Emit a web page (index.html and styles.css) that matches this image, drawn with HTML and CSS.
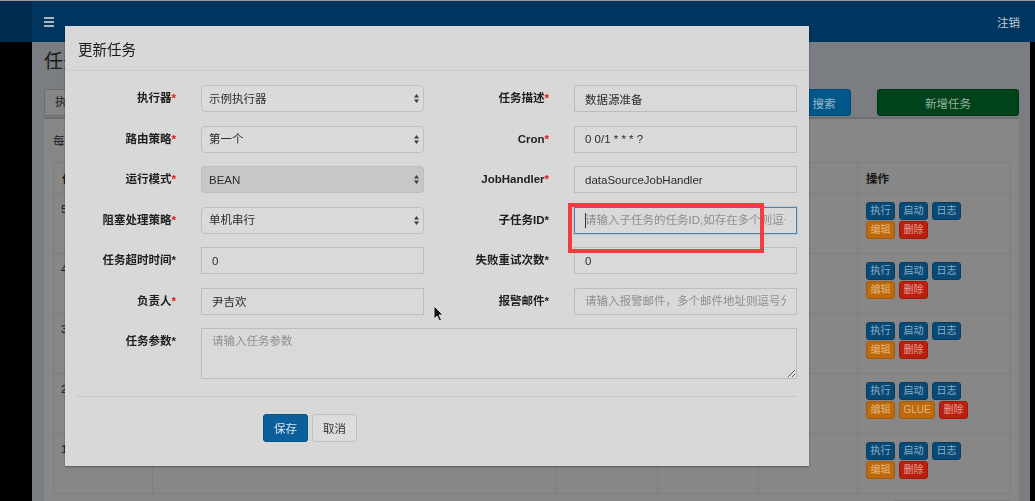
FILE: index.html
```html
<!DOCTYPE html>
<html lang="zh-CN">
<head>
    <meta charset="UTF-8">
    <meta name="viewport" content="width=device-width, initial-scale=1.0">
    <title>任务管理</title>
    <link rel="stylesheet" href="styles.css">
</head>
<body>
    <header class="main-header">
        <div class="logo"></div>
        <nav class="navbar">
            <span class="sidebar-toggle"><i></i><i></i><i></i></span>
            <a class="logout">注销</a>
        </nav>
    </header>

    <div class="wrapper">
        <aside class="sidebar"></aside>
        <div class="content-wrapper">
            <h1 class="page-title">任务管理</h1>
            <div class="filter-row">
                <div class="filter-box">执行器</div>
                <div class="filter-box">任务描述</div>
                <div class="filter-box">JobHandler</div>
                <button class="btn-search">搜索</button>
                <button class="btn-add">新增任务</button>
            </div>
            <div class="box">
                <div class="page-size">每页 10 条记录</div>
                <table class="job-table">
                    <thead>
                        <tr>
                            <th class="col-id">任务ID</th>
                            <th class="col-desc">任务描述</th>
                            <th class="col-mode">运行模式</th>
                            <th class="col-cron">Cron</th>
                            <th class="col-owner">负责人</th>
                            <th class="col-ops">操作</th>
                        </tr>
                    </thead>
                    <tbody>
                        <tr>
                            <td>5</td><td>数据源准备</td><td>BEAN</td><td>0 0/1 * * * ?</td><td>尹吉欢</td>
                            <td>
                                <div class="btn-line"><span class="btn-xs blue">执行</span><span class="btn-xs blue">启动</span><span class="btn-xs blue">日志</span></div>
                                <div class="btn-line"><span class="btn-xs orange">编辑</span><span class="btn-xs red">删除</span></div>
                            </td>
                        </tr>
                        <tr>
                            <td>4</td><td>数据清洗</td><td>BEAN</td><td>0 0/1 * * * ?</td><td>尹吉欢</td>
                            <td>
                                <div class="btn-line"><span class="btn-xs blue">执行</span><span class="btn-xs blue">启动</span><span class="btn-xs blue">日志</span></div>
                                <div class="btn-line"><span class="btn-xs orange">编辑</span><span class="btn-xs red">删除</span></div>
                            </td>
                        </tr>
                        <tr>
                            <td>3</td><td>数据同步</td><td>BEAN</td><td>0 0/1 * * * ?</td><td>尹吉欢</td>
                            <td>
                                <div class="btn-line"><span class="btn-xs blue">执行</span><span class="btn-xs blue">启动</span><span class="btn-xs blue">日志</span></div>
                                <div class="btn-line"><span class="btn-xs orange">编辑</span><span class="btn-xs red">删除</span></div>
                            </td>
                        </tr>
                        <tr>
                            <td>2</td><td>脚本任务</td><td>GLUE</td><td>0 0/1 * * * ?</td><td>尹吉欢</td>
                            <td>
                                <div class="btn-line"><span class="btn-xs blue">执行</span><span class="btn-xs blue">启动</span><span class="btn-xs blue">日志</span></div>
                                <div class="btn-line"><span class="btn-xs orange">编辑</span><span class="btn-xs orange glue">GLUE</span><span class="btn-xs red">删除</span></div>
                            </td>
                        </tr>
                        <tr>
                            <td>1</td><td>示例任务</td><td>BEAN</td><td>0 0/1 * * * ?</td><td>尹吉欢</td>
                            <td>
                                <div class="btn-line"><span class="btn-xs blue">执行</span><span class="btn-xs blue">启动</span><span class="btn-xs blue">日志</span></div>
                                <div class="btn-line"><span class="btn-xs orange">编辑</span><span class="btn-xs red">删除</span></div>
                            </td>
                        </tr>
                    </tbody>
                </table>
                <div class="pagination">
                    <span class="page">上页</span><span class="page active">1</span><span class="page">下页</span>
                </div>
            </div>
        </div>
    </div>

    <div class="modal">
        <div class="modal-header">
            <h4 class="modal-title">更新任务</h4>
        </div>
        <div class="modal-body">
            <form class="form-grid">
                <label>执行器<span class="req">*</span></label>
                <div class="select-wrap">
                    <select class="form-control select"><option>示例执行器</option></select>
                    <svg class="select-arrow" viewBox="0 0 5 9"><polygon points="0,3.6 2.5,0 5,3.6"/><polygon points="0,5.4 2.5,9 5,5.4"/></svg>
                </div>
                <label>任务描述<span class="req">*</span></label>
                <input class="form-control" value="数据源准备">

                <label>路由策略<span class="req">*</span></label>
                <div class="select-wrap">
                    <select class="form-control select"><option>第一个</option></select>
                    <svg class="select-arrow" viewBox="0 0 5 9"><polygon points="0,3.6 2.5,0 5,3.6"/><polygon points="0,5.4 2.5,9 5,5.4"/></svg>
                </div>
                <label>Cron<span class="req">*</span></label>
                <input class="form-control" value="0 0/1 * * * ?">

                <label>运行模式<span class="req">*</span></label>
                <div class="select-wrap">
                    <select class="form-control select disabled"><option>BEAN</option></select>
                    <svg class="select-arrow" viewBox="0 0 5 9"><polygon points="0,3.6 2.5,0 5,3.6"/><polygon points="0,5.4 2.5,9 5,5.4"/></svg>
                </div>
                <label>JobHandler<span class="req">*</span></label>
                <input class="form-control" value="dataSourceJobHandler">

                <label>阻塞处理策略<span class="req">*</span></label>
                <div class="select-wrap">
                    <select class="form-control select"><option>单机串行</option></select>
                    <svg class="select-arrow" viewBox="0 0 5 9"><polygon points="0,3.6 2.5,0 5,3.6"/><polygon points="0,5.4 2.5,9 5,5.4"/></svg>
                </div>
                <label>子任务ID*</label>
                <div class="field">
                    <input class="form-control focused" placeholder="请输入子任务的任务ID,如存在多个则逗号分隔">
                    <span class="caret"></span>
                </div>

                <label>任务超时时间*</label>
                <input class="form-control" value="0">
                <label>失败重试次数*</label>
                <input class="form-control" value="0">

                <label>负责人<span class="req">*</span></label>
                <input class="form-control" value="尹吉欢">
                <label>报警邮件*</label>
                <input class="form-control" placeholder="请输入报警邮件，多个邮件地址则逗号分隔">

                <label>任务参数*</label>
                <textarea class="form-control textarea" placeholder="请输入任务参数"></textarea>
            </form>
            <hr class="divider">
            <div class="modal-actions">
                <button class="btn btn-primary">保存</button>
                <button class="btn btn-default">取消</button>
            </div>
        </div>
    </div>

    <div class="highlight"></div>

    <svg class="mouse" width="11" height="17" viewBox="0 0 11 17">
        <path d="M1 1 L1 14 L4 11 L6.5 16 L8.5 15 L6 10 L10 10 Z" fill="#111" stroke="#ddd" stroke-width="1"/>
    </svg>
</body>
</html>
```

FILE: styles.css
```css
body, html {
    margin: 0;
    padding: 0;
    width: 1035px;
    height: 501px;
    overflow: hidden;
    background-color: #000;
    font-family: "Liberation Sans", "Noto Sans CJK SC", sans-serif;
    font-size: 11.5px;
    color: #222;
}
.main-header {
    display: flex;
    height: 41px;
    border-top: 1px solid #9a9c9e;
}
.logo {
    width: 32px;
    background-color: #002b51;
}
.navbar {
    flex: 1;
    display: flex;
    align-items: center;
    justify-content: space-between;
    padding: 0 15px 0 12px;
    background-color: #00355f;
}
.sidebar-toggle {
    display: flex;
    flex-direction: column;
    gap: 2px;
}
.sidebar-toggle i {
    display: block;
    width: 10px;
    height: 2px;
    background-color: #a9b5c1;
}
.logout {
    color: #c3ced9;
    font-size: 11.5px;
}
.wrapper {
    display: flex;
    height: 459px;
    overflow: hidden;
}
.sidebar {
    width: 32px;
    background-color: #000;
}
.content-wrapper {
    flex: 1;
    margin-right: 5px;
    padding: 0 11px 0 12px;
    overflow: hidden;
    background-color: #7a7d81;
}
.page-title {
    margin: 9px 0 0;
    font-size: 19px;
    line-height: 22px;
    font-weight: normal;
    color: #1b1b1b;
}
.filter-row {
    display: grid;
    grid-template-columns: 225px 225px 225px 54px 142px;
    column-gap: 26px;
    height: 27px;
    margin-top: 16px;
}
.filter-box {
    box-sizing: border-box;
    border: 1px solid #6a6c6e;
    background-color: #868686;
    padding-left: 10px;
    line-height: 25px;
    color: #222;
}
.btn-search, .btn-add {
    border-radius: 3px;
    font-family: inherit;
    font-size: 11.5px;
}
.btn-search {
    background-color: #00578a;
    border: 1px solid #004a76;
    color: #9cb7cc;
}
.btn-add {
    background-color: #00421a;
    border: 1px solid #003413;
    color: #98ae9f;
}
.box {
    margin-top: 1px;
    height: 400px;
    padding: 0 8px 0 9px;
    background-color: #878787;
    border-top: 2px solid #6d6f72;
}
.page-size {
    padding-top: 15px;
    line-height: 14px;
    color: #1b1b1b;
}
.job-table {
    width: 100%;
    margin-top: 14px;
    border-collapse: collapse;
    table-layout: fixed;
}
.job-table th, .job-table td {
    box-sizing: border-box;
    border: 1px solid #7e7e7e;
    text-align: left;
    color: #161616;
}
.job-table th {
    height: 31px;
    padding: 0 8px;
    font-weight: bold;
}
.job-table td {
    height: 60px;
    padding: 9px 7px;
    vertical-align: top;
}
.col-id { width: 99px; }
.col-desc { width: 403px; }
.col-mode { width: 102px; }
.col-cron { width: 101px; }
.col-owner { width: 99px; }
.job-table td:last-child {
    padding: 8px 8px;
}
.btn-line {
    display: flex;
    gap: 4px;
    margin-bottom: 1px;
}
.btn-xs {
    display: inline-block;
    width: 29px;
    height: 18px;
    box-sizing: border-box;
    padding: 0;
    line-height: 16px;
    font-size: 10px;
    text-align: center;
    white-space: nowrap;
    border-radius: 3px;
}
.btn-xs.glue {
    width: 36px;
}
.blue {
    background-color: #084a75;
    color: #8eabc3;
    border: 1px solid #063e63;
}
.orange {
    background-color: #bd6a0e;
    color: #e4b47c;
    border: 1px solid #a45b0a;
}
.red {
    background-color: #ba1f10;
    color: #e4a098;
    border: 1px solid #a3190c;
}
.pagination {
    display: flex;
    justify-content: flex-end;
    margin-top: 6px;
}
.page {
    box-sizing: border-box;
    height: 28px;
    padding: 0 10px;
    line-height: 26px;
    border: 1px solid #7e7e7e;
    color: #1c4f7a;
}
.page.active {
    width: 28px;
    background-color: #084a75;
    color: #9cb7cc;
}

/* modal */
.modal {
    position: fixed;
    left: 65px;
    top: 26px;
    width: 744px;
    background-color: #d8d8d8;
    box-shadow: 0 1px 2px rgba(0, 0, 0, 0.35);
}
.modal-header {
    display: flex;
    align-items: center;
    height: 44px;
    padding: 0 13px;
    border-bottom: 1px solid #cbcbcb;
}
.modal-title {
    margin: 0;
    font-size: 14.5px;
    font-weight: normal;
    color: #1a1a1a;
}
.modal-body {
    padding: 14px 12px 24px;
}
.form-grid {
    display: grid;
    grid-template-columns: 99px 223px 100px 223px;
    grid-template-rows: repeat(6, 27px) 51px;
    column-gap: 25px;
    row-gap: 13.5px;
    margin: 0;
}
.form-grid label {
    text-align: right;
    font-weight: bold;
    line-height: 27px;
    white-space: nowrap;
    color: #1e1e1e;
}
.req {
    color: #e01414;
}
.form-control {
    display: block;
    width: 100%;
    height: 27px;
    box-sizing: border-box;
    margin: 0;
    padding: 0 10px;
    border: 1px solid #bcbcbc;
    background-color: #d9d9d9;
    font-family: inherit;
    font-size: 11.5px;
    color: #2c2c2c;
    outline: none;
}
.form-control::placeholder {
    color: #8e8e8e;
}
.select-wrap, .field {
    position: relative;
}
.select {
    appearance: none;
    -webkit-appearance: none;
    padding-left: 7px;
    border-radius: 4px;
    border-color: #c0c0c0;
    background-color: #dadada;
}
.select.disabled {
    background-color: #c7c7c7;
    border-color: #bdbdbd;
}
.select-arrow {
    position: absolute;
    right: 5px;
    top: 9px;
    width: 5px;
    height: 9px;
    fill: #3a3a3a;
}
.focused {
    border-color: #4f80a7;
    box-shadow: 0 0 2px rgba(60, 120, 170, 0.45);
}
.caret {
    position: absolute;
    left: 11px;
    top: 6px;
    width: 1px;
    height: 15px;
    background-color: #333;
}
.textarea {
    grid-column: 2 / span 3;
    height: 51px;
    padding: 5px 10px;
    line-height: 14px;
    resize: both;
}
.divider {
    margin: 17px 0 17px;
    border: 0;
    border-top: 1px solid #c7c7c7;
}
.modal-actions {
    display: flex;
    gap: 4px;
    padding-left: 186px;
}
.btn {
    height: 28px;
    padding: 0 10px;
    border-radius: 3px;
    font-family: inherit;
    font-size: 11.5px;
}
.btn-primary {
    background-color: #0c5f9b;
    border: 1px solid #0a5186;
    color: #dde7f0;
}
.btn-default {
    background-color: #dcdcdc;
    border: 1px solid #bfbfbf;
    color: #333;
}

/* annotation drawn over the screenshot */
.highlight {
    position: fixed;
    left: 568px;
    top: 203px;
    width: 196px;
    height: 50px;
    box-sizing: border-box;
    border: 4px solid #f23c3d;
}
.mouse {
    position: fixed;
    left: 433px;
    top: 305px;
}
```
